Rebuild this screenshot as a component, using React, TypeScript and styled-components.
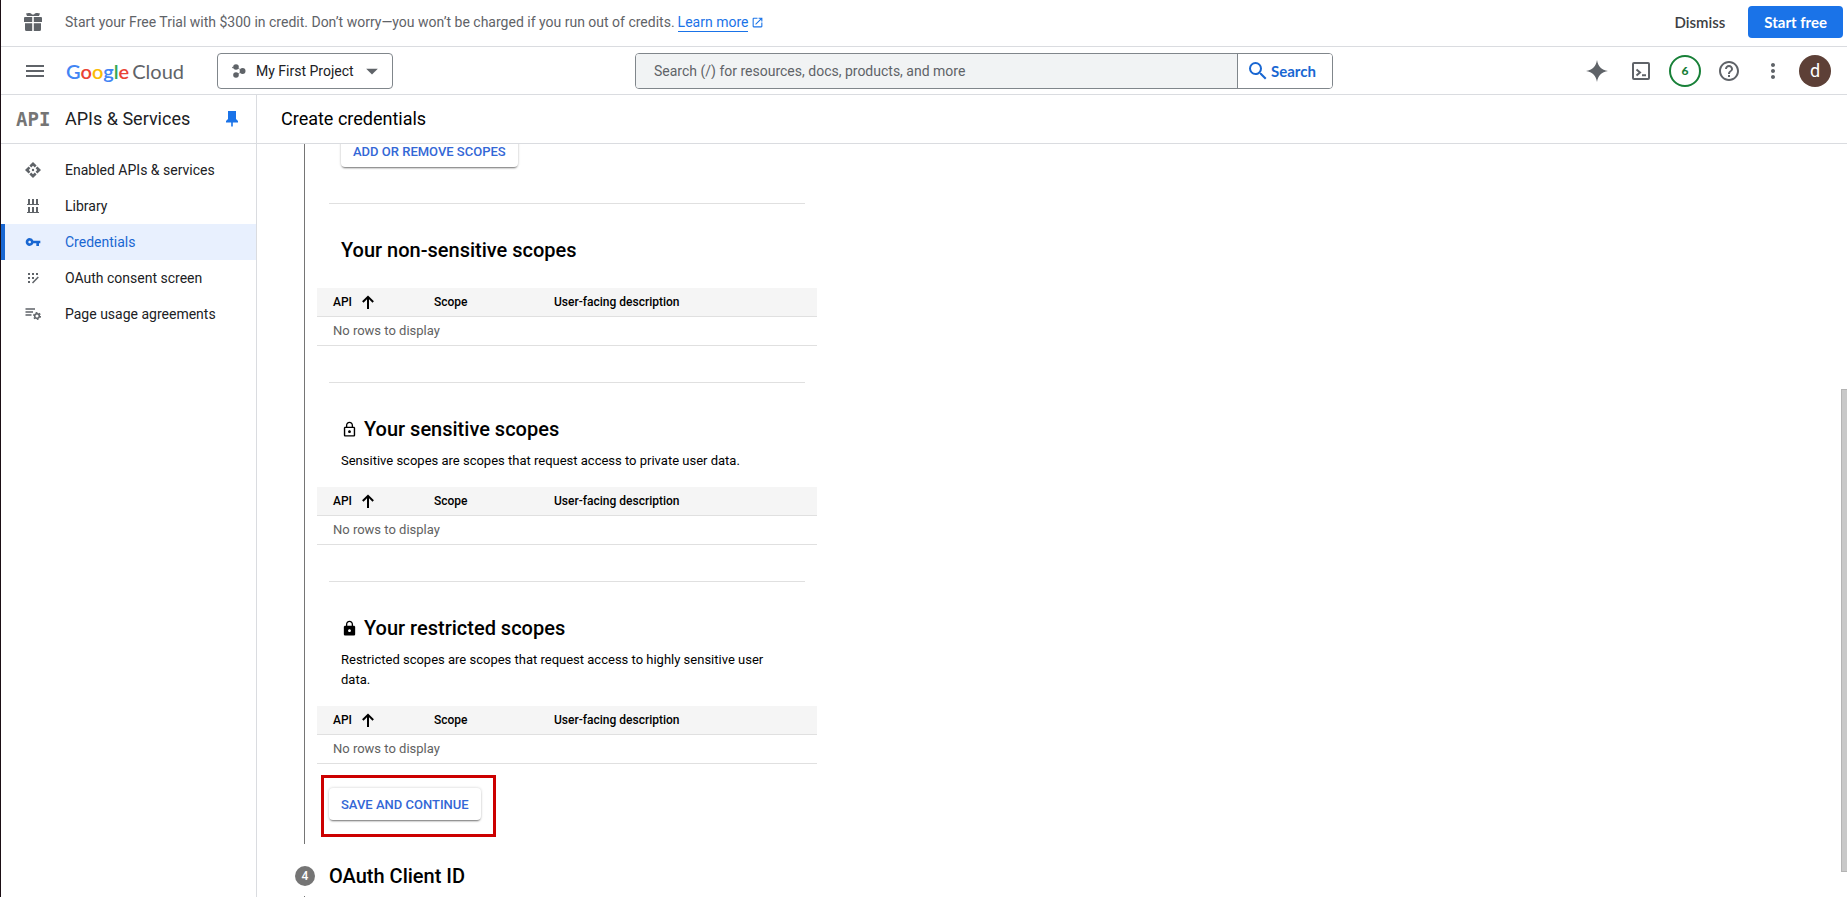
import React from 'react';
import styled, { createGlobalStyle } from 'styled-components';
import {
  MdArrowDropDown,
  MdHelpOutline,
  MdLock,
  MdLockOutline,
  MdMenu,
  MdMoreVert,
  MdOpenInNew,
  MdSearch,
  MdVpnKey,
} from 'react-icons/md';

const GlobalStyle = createGlobalStyle`
  *, *::before, *::after { box-sizing: border-box; }
  body {
    margin: 0;
    background: #fff;
    color: #202124;
    font-family: Roboto, "Liberation Sans", sans-serif;
    font-size: 14px;
    line-height: 20px;
  }
  h1, h2, p { margin: 0; }
  button, input { font-family: inherit; }
  svg { display: block; flex: none; }
`;

const Page = styled.div`
  display: flex;
  flex-direction: column;
  height: 100vh;
  overflow: hidden;
  border-left: 1px solid #1b0e14;
`;

/* Promo bar */

const PromoBar = styled.aside`
  display: flex;
  align-items: center;
  flex: none;
  height: 47px;
  padding: 0 4px 2px 0;
  border-bottom: 1px solid #dadce0;
  color: #5f6368;
`;

const IconSlot = styled.span`
  display: flex;
  align-items: center;
  justify-content: center;
  flex: none;
  width: 64px;
  color: #5f6368;
`;

const PromoText = styled.p`
  display: flex;
  align-items: center;
  flex: 1;
`;

const PromoLink = styled.a`
  display: flex;
  align-items: center;
  gap: 3px;
  margin-left: 3px;
  color: #1a73e8;
  text-decoration: none;
`;

const LinkLabel = styled.span`
  border-bottom: 1px solid #1a73e8;
  line-height: 18px;
`;

const PromoButton = styled.button<{ $primary?: boolean }>`
  height: 32px;
  padding: 0 ${(p) => (p.$primary ? 16 : 23)}px;
  border: 0;
  border-radius: 4px;
  background: ${(p) => (p.$primary ? '#1a73e8' : 'transparent')};
  color: ${(p) => (p.$primary ? '#fff' : '#3c4043')};
  font-family: Lato, Roboto, sans-serif;
  font-size: 15px;
  font-weight: ${(p) => (p.$primary ? 700 : 600)};
  white-space: nowrap;
`;

/* Top header */

const Header = styled.header`
  display: flex;
  align-items: center;
  flex: none;
  height: 48px;
  border-bottom: 1px solid #dadce0;
`;

const IconButton = styled.button<{ $width: number }>`
  display: flex;
  align-items: center;
  justify-content: center;
  flex: none;
  width: ${(p) => p.$width}px;
  height: 40px;
  padding: 0;
  border: 0;
  background: none;
  color: #5f6368;
`;

const MenuButton = styled(IconButton)`
  padding-left: 3px;
`;

const Logo = styled.a`
  display: flex;
  flex: none;
  gap: 3px;
  width: 151px;
  color: #5f6368;
  font-family: Lato, Roboto, sans-serif;
  font-size: 20px;
  line-height: 24px;
  text-decoration: none;
`;

const LogoLetter = styled.span<{ $color: string }>`
  color: ${(p) => p.$color};
  font-weight: 600;
`;

const ProjectButton = styled.button`
  display: flex;
  align-items: center;
  flex: none;
  width: 176px;
  height: 36px;
  padding: 0 6px 0 14px;
  border: 1px solid #80868b;
  border-radius: 4px;
  background: #fff;
  color: #202124;
  font-size: 14px;
`;

const ProjectName = styled.span`
  flex: 1;
  margin-left: 10px;
  text-align: left;
  white-space: nowrap;
`;

const SearchForm = styled.form`
  display: flex;
  flex: 0 1 698px;
  height: 36px;
  margin: 0 auto;
  border: 1px solid #80868b;
  border-radius: 4px;
  overflow: hidden;
`;

const SearchInput = styled.input`
  flex: 1;
  min-width: 0;
  padding: 0 18px;
  border: 0;
  background: #f1f3f4;
  color: #202124;
  font-size: 14px;
  &::placeholder { color: #5f6368; opacity: 1; }
`;

const SearchButton = styled.button`
  display: flex;
  align-items: center;
  gap: 1px;
  flex: none;
  width: 95px;
  padding: 0 0 0 8px;
  border: 0;
  border-left: 1px solid #80868b;
  background: #fff;
  color: #1967d2;
  font-family: Lato, Roboto, sans-serif;
  font-size: 15px;
  font-weight: 700;
`;

const HeaderActions = styled.div`
  display: flex;
  align-items: center;
  flex: none;
  padding-right: 16px;
`;

const CountRing = styled.span`
  display: flex;
  align-items: center;
  justify-content: center;
  width: 32px;
  height: 32px;
  border: 2px solid #188038;
  border-radius: 50%;
  color: #188038;
  font-family: Lato, Roboto, sans-serif;
  font-size: 12px;
  font-weight: 900;
`;

const Avatar = styled.button`
  width: 32px;
  height: 32px;
  margin-left: 4px;
  padding: 0;
  border: 0;
  border-radius: 50%;
  background: #5d4037;
  color: #fff;
  font-size: 18px;
`;

/* Body */

const Columns = styled.div`
  display: flex;
  flex: 1;
  min-height: 0;
`;

const Sidebar = styled.nav`
  display: flex;
  flex-direction: column;
  flex: none;
  width: 256px;
  border-right: 1px solid #dadce0;
`;

const SidebarHead = styled.div`
  display: flex;
  align-items: center;
  flex: none;
  height: 49px;
  padding-right: 18px;
  border-bottom: 1px solid #dadce0;
  color: #202124;
`;

const ApiMark = styled.span`
  width: 64px;
  padding-left: 15px;
  color: #757575;
  font-family: "DejaVu Sans Mono", monospace;
  font-size: 19px;
  font-weight: 700;
`;

const SidebarTitle = styled.span`
  flex: 1;
  font-size: 18px;
`;

const NavList = styled.ul`
  margin: 0;
  padding: 8px 0;
  list-style: none;
`;

const NavLink = styled.a<{ $active?: boolean }>`
  display: flex;
  align-items: center;
  height: 36px;
  color: ${(p) => (p.$active ? '#1967d2' : '#202124')};
  background: ${(p) => (p.$active ? '#e8f0fe' : 'transparent')};
  box-shadow: ${(p) => (p.$active ? 'inset 4px 0 #1967d2' : 'none')};
  text-decoration: none;
  ${IconSlot} { color: ${(p) => (p.$active ? '#1967d2' : '#5f6368')}; }
`;

const Main = styled.main`
  display: flex;
  flex-direction: column;
  flex: 1;
  min-width: 0;
`;

const TitleBar = styled.div`
  display: flex;
  align-items: center;
  flex: none;
  height: 49px;
  padding-left: 24px;
  border-bottom: 1px solid #dadce0;
`;

const PageTitle = styled.h1`
  color: #000;
  font-size: 18px;
  font-weight: 400;
`;

const ScrollArea = styled.div`
  position: relative;
  flex: 1;
  min-height: 0;
  overflow: hidden;
  padding-left: 38px;
`;

const ScrollThumb = styled.div`
  position: absolute;
  top: 245px;
  right: 0;
  bottom: 25px;
  width: 6px;
  border: 1px solid #b4b4b4;
  border-right: 0;
  background: #c9c9c9;
`;

/* Stepper */

const StepBody = styled.section`
  max-width: 513px;
  margin: -9px 0 0 9px;
  padding: 0 0 24px 12px;
  border-left: 1px solid #757575;
`;

const RaisedButton = styled.button`
  display: block;
  height: 32px;
  padding: 0 12px;
  border: 0;
  border-radius: 4px;
  background: #fff;
  box-shadow: 0 2px 2px -1px rgba(0, 0, 0, 0.5), 0 0 3px rgba(0, 0, 0, 0.2);
  color: #3367d6;
  font-size: 13px;
  font-weight: 500;
  text-transform: uppercase;
  white-space: nowrap;
`;

const AddRow = styled.div`
  padding-left: 24px;
`;

const Divider = styled.hr`
  height: 1px;
  margin: 36px 12px 32px;
  border: 0;
  background: #e0e0e0;
`;

const SectionTitle = styled.h2`
  display: flex;
  align-items: center;
  gap: 6px;
  margin-left: 24px;
  color: #000;
  font-size: 20px;
  font-weight: 500;
  line-height: 28px;
`;

const SectionText = styled.p`
  margin: 8px 24px 0;
  color: #000;
  font-size: 13px;
`;

const ScopeTable = styled.table<{ $gap: number }>`
  width: 100%;
  margin-top: ${(p) => p.$gap}px;
  border-spacing: 0;
  table-layout: fixed;
  text-align: left;
`;

const HeadCell = styled.th<{ $width?: number }>`
  width: ${(p) => (p.$width ? `${p.$width}px` : 'auto')};
  height: 29px;
  padding: 0 16px;
  border-bottom: 1px solid #e0e0e0;
  background: #f5f5f5;
  color: #000;
  font-size: 12px;
  font-weight: 500;
`;

const SortLabel = styled.span`
  display: flex;
  align-items: center;
  gap: 10px;
`;

const BodyCell = styled.td`
  height: 29px;
  padding: 0 16px;
  border-bottom: 1px solid #e0e0e0;
  color: #616161;
  font-size: 13px;
`;

const SaveRow = styled.div`
  display: flex;
  margin: 24px 12px 0;
`;

const Highlighted = styled.div`
  position: relative;
`;

const HighlightFrame = styled.span`
  position: absolute;
  inset: -13px -15px -17px -8px;
  border: 3px solid #cc0000;
  pointer-events: none;
`;

const StepHeader = styled.div`
  display: flex;
  align-items: center;
  gap: 14px;
  height: 52px;
  padding-top: 12px;
`;

const StepNumber = styled.span`
  width: 20px;
  height: 20px;
  border-radius: 50%;
  background: #757575;
  color: #fff;
  font-size: 12px;
  font-weight: 500;
  text-align: center;
`;

const StepTitle = styled.h2`
  color: #000;
  font-size: 20px;
  font-weight: 500;
`;

const StepTail = styled.div`
  height: 24px;
  margin-left: 9px;
  border-left: 1px solid #757575;
`;

/* Drawn icons */

const GiftIcon = () => (
  <svg width="18" height="18" viewBox="0 0 18 18" fill="currentColor" aria-hidden="true">
    <path d="M2 0.5 C4 -0.3 7 -0.2 8 1.5 H10 C11 -0.2 14 -0.3 16 0.5 L15 3 H3 Z" />
    <path d="M1 4 H8.2 V9 H0 V5 Q0 4 1 4 Z M9.8 4 H17 Q18 4 18 5 V9 H9.8 Z" />
    <path d="M1 10.3 H8.2 V18 H2.5 Q1 18 1 16.5 Z M9.8 10.3 H17 V16.5 Q17 18 15.5 18 H9.8 Z" />
  </svg>
);

const ProjectIcon = () => (
  <svg width="14" height="14" viewBox="0 0 14 14" fill="#5f6368" aria-hidden="true">
    <circle cx="4" cy="3" r="2.8" />
    <circle cx="4" cy="11" r="2.8" />
    <circle cx="10.6" cy="7" r="2.9" />
    <circle cx="0.9" cy="3.5" r="0.8" />
    <path d="M4 3 L10.6 7 L4 11" fill="none" stroke="#5f6368" strokeWidth="0.6" />
  </svg>
);

const SparkIcon = () => (
  <svg width="22" height="22" viewBox="0 0 22 22" fill="currentColor" aria-hidden="true">
    <path d="M11 0 C12 6.5 15.5 10 22 11 C15.5 12 12 15.5 11 22 C10 15.5 6.5 12 0 11 C6.5 10 10 6.5 11 0 Z" />
  </svg>
);

const ShellIcon = () => (
  <svg width="18" height="18" viewBox="0 0 18 18" fill="none" stroke="currentColor" strokeWidth="2" aria-hidden="true">
    <rect x="1" y="1" width="16" height="16" rx="1" />
    <path d="M4.5 7.5 L8 10.5 L4.5 13.5 M10 13.3 H14" />
  </svg>
);

const PinIcon = () => (
  <svg width="12" height="16" viewBox="0 0 12 16" fill="#1a73e8" aria-hidden="true">
    <path d="M2 0 H10 V8 L12 10 V11.5 H6.8 V15 L6 16 L5.2 15 V11.5 H0 V10 L2 8 Z" />
  </svg>
);

const SortArrow = () => (
  <svg width="12" height="14" viewBox="0 0 12 14" fill="none" stroke="#000" strokeWidth="2" aria-hidden="true">
    <path d="M6 14 V2 M0.8 7 L6 1.8 L11.2 7" />
  </svg>
);

const EnabledIcon = () => (
  <svg width="16" height="16" viewBox="0 0 16 16" fill="#5f6368" aria-hidden="true">
    <path d="M8 0 L11.6 3.6 L9.8 5.4 L8 3.8 L6.2 5.4 L4.4 3.6 Z M8 16 L11.6 12.4 L9.8 10.6 L8 12.2 L6.2 10.6 L4.4 12.4 Z" />
    <path d="M0 8 L3.6 4.4 L5.4 6.2 L3.8 8 L5.4 9.8 L3.6 11.6 Z M16 8 L12.4 4.4 L10.6 6.2 L12.2 8 L10.6 9.8 L12.4 11.6 Z" />
    <circle cx="8" cy="8" r="1.2" />
  </svg>
);

const LibraryIcon = () => (
  <svg width="12" height="14" viewBox="0 0 12 14" fill="#5f6368" aria-hidden="true">
    <path d="M1 0 H3 V5 H5 V0 H7 V5 H9 V0 H11 V5 H12 V6 H0 V5 H1 Z" />
    <path d="M1 8 H3 V13 H5 V8 H7 V13 H9 V8 H11 V13 H12 V14 H0 V13 H1 Z" />
  </svg>
);

const ConsentIcon = () => (
  <svg width="12" height="12" viewBox="0 0 12 12" fill="#5f6368" aria-hidden="true">
    <path d="M1 1h2v2h-2z M5 1h2v2h-2z M9 1h2v2h-2z M1 5h2v2h-2z M5 5h2v2h-2z M1 9h2v2h-2z" />
    <path d="M11.3 5 L5.5 11" stroke="#5f6368" strokeWidth="1.5" />
  </svg>
);

const AgreementIcon = () => (
  <svg width="16" height="14" viewBox="0 0 16 14" aria-hidden="true">
    <path d="M0.5 2 H10 M0.5 5 H8 M0.5 8 H6.5" stroke="#5f6368" strokeWidth="1.6" />
    <circle cx="12" cy="9" r="2.3" fill="none" stroke="#5f6368" strokeWidth="1.5" />
    <circle cx="12" cy="9" r="3.4" fill="none" stroke="#5f6368" strokeWidth="1.2" strokeDasharray="1.78 1.78" />
  </svg>
);

const NAV_ITEMS = [
  { label: 'Enabled APIs & services', icon: <EnabledIcon /> },
  { label: 'Library', icon: <LibraryIcon /> },
  { label: 'Credentials', icon: <MdVpnKey size={16} />, active: true },
  { label: 'OAuth consent screen', icon: <ConsentIcon /> },
  { label: 'Page usage agreements', icon: <AgreementIcon /> },
];

const BRAND: [string, string][] = [
  ['G', '#4285f4'],
  ['o', '#ea4335'],
  ['o', '#fbbc04'],
  ['g', '#4285f4'],
  ['l', '#34a853'],
  ['e', '#ea4335'],
];

interface ScopeSectionProps {
  title: string;
  icon?: React.ReactNode;
  text?: string;
}

function ScopeSection({ title, icon, text }: ScopeSectionProps) {
  return (
    <>
      <Divider />
      <SectionTitle>
        {icon}
        {title}
      </SectionTitle>
      {text && <SectionText>{text}</SectionText>}
      <ScopeTable $gap={text ? 16 : 24} aria-label={title}>
        <thead>
          <tr>
            <HeadCell $width={101}>
              <SortLabel>
                API <SortArrow />
              </SortLabel>
            </HeadCell>
            <HeadCell $width={120}>Scope</HeadCell>
            <HeadCell>User-facing description</HeadCell>
          </tr>
        </thead>
        <tbody>
          <tr>
            <BodyCell colSpan={3}>No rows to display</BodyCell>
          </tr>
        </tbody>
      </ScopeTable>
    </>
  );
}

export default function App() {
  return (
    <Page>
      <GlobalStyle />
      <PromoBar>
        <IconSlot>
          <GiftIcon />
        </IconSlot>
        <PromoText>
          Start your Free Trial with $300 in credit. Don’t worry—you won’t be charged if you run out of credits.
          <PromoLink href="#learn">
            <LinkLabel>Learn more</LinkLabel>
            <MdOpenInNew size={13} />
          </PromoLink>
        </PromoText>
        <PromoButton type="button">Dismiss</PromoButton>
        <PromoButton type="button" $primary>
          Start free
        </PromoButton>
      </PromoBar>

      <Header>
        <MenuButton type="button" $width={65} aria-label="Main menu">
          <MdMenu size={24} />
        </MenuButton>
        <Logo href="#home">
          <span>
            {BRAND.map(([letter, color], i) => (
              <LogoLetter key={i} $color={color}>
                {letter}
              </LogoLetter>
            ))}
          </span>
          <span>Cloud</span>
        </Logo>
        <ProjectButton type="button">
          <ProjectIcon />
          <ProjectName>My First Project</ProjectName>
          <MdArrowDropDown size={28} color="#5f6368" />
        </ProjectButton>
        <SearchForm role="search">
          <SearchInput
            type="text"
            aria-label="Search"
            placeholder="Search (/) for resources, docs, products, and more"
          />
          <SearchButton type="button">
            <MdSearch size={24} />
            Search
          </SearchButton>
        </SearchForm>
        <HeaderActions>
          <IconButton type="button" $width={44} aria-label="Assistant">
            <SparkIcon />
          </IconButton>
          <IconButton type="button" $width={44} aria-label="Cloud Shell">
            <ShellIcon />
          </IconButton>
          <IconButton type="button" $width={44} aria-label="Notifications">
            <CountRing>6</CountRing>
          </IconButton>
          <IconButton type="button" $width={44} aria-label="Help">
            <MdHelpOutline size={24} />
          </IconButton>
          <IconButton type="button" $width={44} aria-label="More options">
            <MdMoreVert size={24} />
          </IconButton>
          <Avatar type="button">d</Avatar>
        </HeaderActions>
      </Header>

      <Columns>
        <Sidebar>
          <SidebarHead>
            <ApiMark>API</ApiMark>
            <SidebarTitle>APIs &amp; Services</SidebarTitle>
            <PinIcon />
          </SidebarHead>
          <NavList>
            {NAV_ITEMS.map((item) => (
              <li key={item.label}>
                <NavLink href="#nav" $active={item.active}>
                  <IconSlot>{item.icon}</IconSlot>
                  {item.label}
                </NavLink>
              </li>
            ))}
          </NavList>
        </Sidebar>

        <Main>
          <TitleBar>
            <PageTitle>Create credentials</PageTitle>
          </TitleBar>
          <ScrollArea>
            <StepBody>
              <AddRow>
                <RaisedButton type="button">Add or remove scopes</RaisedButton>
              </AddRow>
              <ScopeSection title="Your non-sensitive scopes" />
              <ScopeSection
                title="Your sensitive scopes"
                icon={<MdLockOutline size={17} />}
                text="Sensitive scopes are scopes that request access to private user data."
              />
              <ScopeSection
                title="Your restricted scopes"
                icon={<MdLock size={17} />}
                text="Restricted scopes are scopes that request access to highly sensitive user data."
              />
              <SaveRow>
                <Highlighted>
                  <RaisedButton type="button">Save and continue</RaisedButton>
                  <HighlightFrame />
                </Highlighted>
              </SaveRow>
            </StepBody>
            <StepHeader>
              <StepNumber>4</StepNumber>
              <StepTitle>OAuth Client ID</StepTitle>
            </StepHeader>
            <StepTail />
            <ScrollThumb />
          </ScrollArea>
        </Main>
      </Columns>
    </Page>
  );
}
